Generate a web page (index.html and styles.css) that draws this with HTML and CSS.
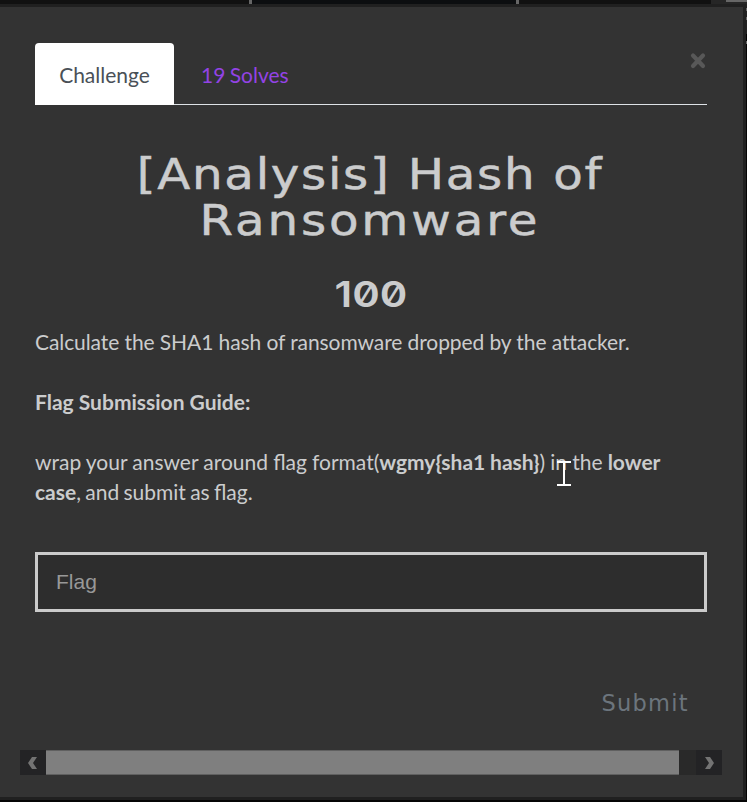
FILE: index.html
```html
<!DOCTYPE html>
<html lang="en">
<head>
<meta charset="utf-8">
<title>Challenge</title>
<link rel="stylesheet" href="styles.css">
</head>
<body>
<div class="backdrop"><i class="divider first"></i><i class="divider second"></i><i class="corner"></i></div>
<i class="edge-marks"></i>
<main class="modal">
  <button class="close" aria-label="Close"><svg width="16" height="18" viewBox="0 0 16 18"><path d="M3 3.5L13 14M13 3.5L3 14"/></svg></button>
  <nav class="tabs">
    <a class="tab active">Challenge</a>
    <a class="tab">19 Solves</a>
  </nav>
  <h2 class="title"><span class="line one">[Analysis] Hash of</span><span class="line two">Ransomware</span></h2>
  <h3 class="points">100</h3>
  <div class="description">
    <p class="task">Calculate the SHA1 hash of ransomware dropped by the attacker.</p>
    <p><strong>Flag Submission Guide:</strong></p>
    <p class="guide">wrap your answer around flag format(<strong>wgmy{sha1 hash}</strong>) in the <strong>lower</strong><br><span class="ending"><strong>case</strong>, and submit as flag.</span></p>
  </div>
  <input class="flag" type="text" placeholder="Flag">
  <div class="actions"><button class="submit">Submit</button></div>
  <div class="scrollbar">
    <span class="arrow"><svg width="10" height="12" viewBox="0 0 10 12"><path d="M4 0H9L5 6L9 12H4L0 6Z"/></svg></span>
    <span class="thumb"></span>
    <span class="arrow"><svg width="10" height="12" viewBox="0 0 10 12"><path d="M1 0H6L10 6L6 12H1L5 6Z"/></svg></span>
  </div>
</main>
<svg class="cursor" width="14" height="25" viewBox="0 0 14 25"><path d="M0 1H14M7 1V24M0 24H14"/></svg>
</body>
</html>
```
FILE: styles.css
```css
* { box-sizing: border-box; }
body {
  margin: 0;
  height: 802px;
  overflow: hidden;
  background: #050505;
  color: #cbcccd;
  font: 21px/30px Lato, sans-serif;
}
.backdrop {
  position: relative;
  height: 4px;
  background: linear-gradient(90deg, #111 0 249px, #0c0e10 249px 516px, #111 516px 711px, #262626 711px);
}
.divider { position: absolute; top: 0; width: 3px; height: 4px; background: #666; }
.first { left: 249px; }
.second { left: 516px; }
.corner { position: absolute; top: 0; right: 0; width: 21px; height: 2px; background: #666; }
.edge-marks {
  position: absolute;
  top: 4px;
  right: 0;
  width: 1px;
  height: 40px;
  background: linear-gradient(#222 0 4px, #666 4px 7px, #222 7px 13px, #666 13px 16px, #222 16px 30px, #000 30px 37px, #666 37px);
}
.modal {
  position: relative;
  width: 746px;
  height: 796px;
  padding: 36px 36px 0 35px;
  border: solid #202020;
  border-width: 3px 3px 3px 0;
  background: #333;
}
.close {
  position: absolute;
  top: 45px;
  right: 37px;
  width: 16px;
  height: 18px;
  padding: 0;
  border: 0;
  background: none;
}
.close svg { display: block; fill: none; stroke: #585858; stroke-width: 4.2; stroke-linecap: round; }
.tabs {
  display: flex;
  width: 672px;
  height: 62px;
  border-bottom: 1px solid #dee2e6;
}
.tab { height: 62px; padding: 17px 26px 0 27px; color: #9343e5; word-spacing: -1px; }
.tab.active {
  width: 139px;
  padding: 17px 0 0;
  border-radius: 4px 4px 0 0;
  background: #fff;
  color: #495057;
  text-align: center;
}
.title {
  width: 672px;
  margin: 47px 0 0;
  font: 42px/46px "DejaVu Sans", sans-serif;
  text-align: center;
  -webkit-text-stroke: .5px;
}
.line { display: block; margin-left: -2px; white-space: nowrap; transform: scaleX(1.15); }
.one { letter-spacing: 1.5px; }
.two { letter-spacing: 2.5px; }
.points {
  width: 672px;
  height: 40px;
  margin: 30px 0 0;
  font: 600 36px/40px Inter, sans-serif;
  font-feature-settings: "zero";
  text-align: center;
  transform: scaleX(1.16);
}
.description { margin-top: 13px; white-space: nowrap; }
.description p { margin: 0 0 30px; }
.task { letter-spacing: -.09px; }
.guide { word-spacing: -.25px; }
.ending { word-spacing: -1.1px; }
.flag {
  display: block;
  width: 672px;
  height: 60px;
  margin-top: 45px;
  padding: 0 18px;
  border: 3px solid #cbcbcb;
  border-radius: 0;
  background: #2d2d2d;
  font: 21px "Liberation Sans", sans-serif;
}
.flag::placeholder { color: #989898; opacity: 1; }
.actions { display: flex; justify-content: flex-end; width: 672px; margin-top: 71px; }
.submit {
  height: 40px;
  padding: 0 18px;
  border: 0;
  background: none;
  color: #6c757d;
  font: 22.5px/40px "DejaVu Sans", sans-serif;
  letter-spacing: 1.3px;
}
.scrollbar {
  display: flex;
  justify-content: space-between;
  width: 702px;
  height: 25px;
  margin: 27px 0 0 -15px;
  background: #292929;
}
.arrow { display: flex; align-items: center; justify-content: center; width: 26px; background: #232325; }
.arrow svg { fill: #737373; }
.thumb { width: 633px; margin-right: auto; border: solid #606060; border-width: 1px 0; background: #7f7f7f; }
.cursor { position: absolute; left: 557px; top: 461px; fill: none; stroke: #fff; stroke-width: 2; }
```
